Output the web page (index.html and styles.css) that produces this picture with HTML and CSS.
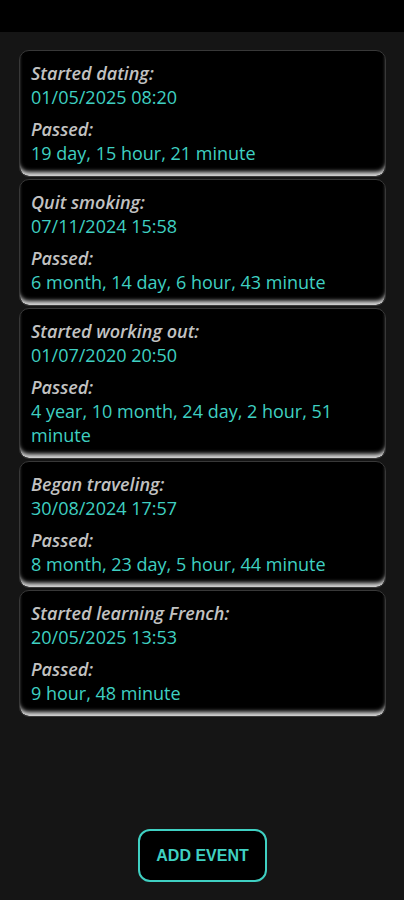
FILE: index.html
```
<!DOCTYPE html>
<html>
<head>
    <meta charset="utf-8" />
    <title>Events</title>
    <link rel="stylesheet" href="styles.css">
</head>
<body>
    <div class="statusbar"></div>
    <div class="main">
        <div class="list">
            <div class="card">
                <div class="label">Started dating:</div>
                <div class="value">01/05/2025 08:20</div>
                <div class="label second">Passed:</div>
                <div class="value">19 day, 15 hour, 21 minute</div>
            </div>
            <div class="card">
                <div class="label">Quit smoking:</div>
                <div class="value">07/11/2024 15:58</div>
                <div class="label second">Passed:</div>
                <div class="value">6 month, 14 day, 6 hour, 43 minute</div>
            </div>
            <div class="card">
                <div class="label">Started working out:</div>
                <div class="value">01/07/2020 20:50</div>
                <div class="label second">Passed:</div>
                <div class="value">4 year, 10 month, 24 day, 2 hour, 51 minute</div>
            </div>
            <div class="card">
                <div class="label">Began traveling:</div>
                <div class="value">30/08/2024 17:57</div>
                <div class="label second">Passed:</div>
                <div class="value">8 month, 23 day, 5 hour, 44 minute</div>
            </div>
            <div class="card">
                <div class="label">Started learning French:</div>
                <div class="value">20/05/2025 13:53</div>
                <div class="label second">Passed:</div>
                <div class="value">9 hour, 48 minute</div>
            </div>
        </div>
        <div class="footer">
            <button class="addbtn">ADD EVENT</button>
        </div>
    </div>
</body>
</html>
```
FILE: styles.css
```
html, body {
    margin: 0;
    padding: 0;
    background: #151515;
}
body {
    width: 404px;
    height: 900px;
    font-family: "Open Sans", "Noto Sans", sans-serif;
    display: flex;
    flex-direction: column;
}
.statusbar {
    height: 32px;
    background: #000;
}
.main {
    flex-grow: 1;
    display: flex;
    flex-direction: column;
    padding: 18px 18px 0 19px;
}
.list {
    display: flex;
    flex-direction: column;
    gap: 2px;
}
.card {
    background: #000;
    border: 1px solid #383838;
    border-radius: 10px;
    padding: 10px 11px 11px 11px;
    box-shadow: inset 0 -6px 4px -2px rgba(225, 225, 225, 0.95);
}
.label {
    color: #c2c2c2;
    font-style: italic;
    font-weight: 600;
    font-size: 18px;
    line-height: 24px;
}
.label.second {
    margin-top: 8px;
}
.value {
    color: #3fd0c2;
    font-size: 18px;
    line-height: 24px;
}
.footer {
    flex-grow: 1;
    display: flex;
    align-items: flex-end;
    justify-content: center;
    padding-bottom: 18px;
}
.addbtn {
    width: 129px;
    height: 53px;
    background: #000;
    border: 2.5px solid #3fd0c2;
    border-radius: 12px;
    color: #3fd0c2;
    font-family: "Liberation Sans", Arial, sans-serif;
    font-weight: bold;
    font-size: 16px;
    padding: 0;
}
```
